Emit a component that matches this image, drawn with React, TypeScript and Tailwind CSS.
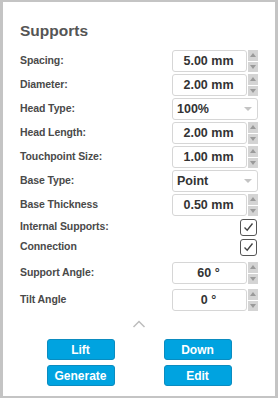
import React from 'react';

const font = { fontFamily: '"Liberation Sans", Arial, sans-serif' };

function Spin({ value }: { value: string }) {
    return (
        <div className="flex h-[22px] w-[86px]">
            <div className="flex-1 flex items-center justify-center border border-[#d6d6d6] rounded-[3px] bg-white text-[12.5px] text-[#333] font-semibold pr-[2px]">
                {value}
            </div>
            <div className="w-[10px] ml-px flex flex-col gap-px">
                <div className="flex-1 bg-[#d4d4d4] flex items-center justify-center">
                    <div className="w-0 h-0 border-l-[3.5px] border-r-[3.5px] border-b-[4px] border-l-transparent border-r-transparent border-b-[#9a9a9a]" />
                </div>
                <div className="flex-1 bg-[#d4d4d4] flex items-center justify-center">
                    <div className="w-0 h-0 border-l-[3.5px] border-r-[3.5px] border-t-[4px] border-l-transparent border-r-transparent border-t-[#9a9a9a]" />
                </div>
            </div>
        </div>
    );
}

function Select({ value }: { value: string }) {
    return (
        <div className="flex h-[22px] w-[86px] items-center justify-between border border-[#d6d6d6] rounded-[3px] bg-white pl-[4px] pr-[5px] text-[12.5px] text-[#333] font-semibold">
            <span>{value}</span>
            <div className="w-0 h-0 border-l-[4px] border-r-[4px] border-t-[4px] border-l-transparent border-r-transparent border-t-[#c4c4c4]" />
        </div>
    );
}

function Check() {
    return (
        <div className="w-[17px] h-[17px] mr-[1px] border border-[#555] rounded-[3px] bg-white flex items-center justify-center">
            <svg width="11" height="10" viewBox="0 0 11 10">
                <path d="M1.5 5.5 L4.2 8.2 L9.5 1.5" fill="none" stroke="#444" strokeWidth="1.4" />
            </svg>
        </div>
    );
}

function Row({ label, children, h = 'h-[22px]' }: { label: string; children: React.ReactNode; h?: string }) {
    return (
        <div className={`flex items-center justify-between ${h}`}>
            <span className="text-[10.5px] font-bold text-[#4a4a4a] tracking-[-0.1px]">{label}</span>
            {children}
        </div>
    );
}

function Btn({ label }: { label: string }) {
    return (
        <button className="w-[68px] h-[21px] rounded-[3px] bg-[#00a3e0] border border-[#0b8cc0] text-white text-[12px] font-bold flex items-center justify-center">
            {label}
        </button>
    );
}

export default function App() {
    return (
        <div style={font} className="w-[278px] h-[398px] bg-white border-l-[3px] border-r-[3px] border-t-2 border-b-2 border-[#c4c4c4] flex flex-col">
            <div className="pl-[17px] pr-[17px] pt-[20px]">
                <h1 className="text-[15.5px] font-bold text-[#555] leading-[18px]">Supports</h1>
                <div className="flex flex-col gap-[2px] mt-[10px]">
                    <Row label="Spacing:"><Spin value="5.00 mm" /></Row>
                    <Row label="Diameter:"><Spin value="2.00 mm" /></Row>
                    <Row label="Head Type:"><Select value="100%" /></Row>
                    <Row label="Head Length:"><Spin value="2.00 mm" /></Row>
                    <Row label="Touchpoint Size:"><Spin value="1.00 mm" /></Row>
                    <Row label="Base Type:"><Select value="Point" /></Row>
                    <Row label="Base Thickness"><Spin value="0.50 mm" /></Row>
                    <Row label="Internal Supports:" h="h-[18px]"><Check /></Row>
                    <Row label="Connection" h="h-[18px]"><Check /></Row>
                    <div className="h-[2px]" />
                    <Row label="Support Angle:"><Spin value="60 °" /></Row>
                    <div className="h-[1px]" />
                    <Row label="Tilt Angle"><Spin value="0 °" /></Row>
                </div>
            </div>
            <div className="flex justify-center mt-[9px]">
                <svg width="14" height="8" viewBox="0 0 14 8">
                    <path d="M1.5 7 L7 1.5 L12.5 7" fill="none" stroke="#bdbdbd" strokeWidth="1.5" />
                </svg>
            </div>
            <div className="flex flex-col gap-[5px] mt-[11px] items-center">
                <div className="flex gap-[49px]">
                    <Btn label="Lift" />
                    <Btn label="Down" />
                </div>
                <div className="flex gap-[49px]">
                    <Btn label="Generate" />
                    <Btn label="Edit" />
                </div>
            </div>
        </div>
    );
}
